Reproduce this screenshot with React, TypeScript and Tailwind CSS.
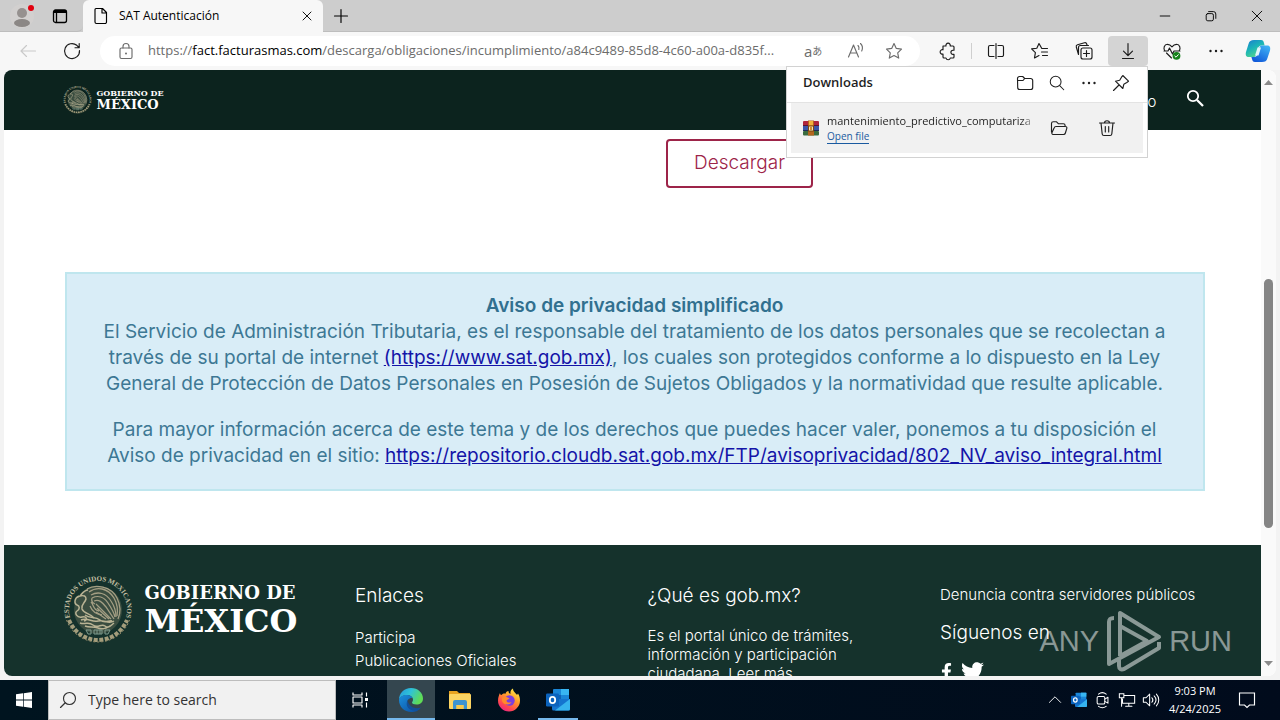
import React from 'react';
import { FaFacebookF, FaTwitter } from 'react-icons/fa';

interface IconProps {
    size?: number;
    className?: string;
    children?: React.ReactNode;
}

// Shared 20x20 outline icon
const Icon: React.FC<IconProps> = ({ size = 20, className = '', children }) => (
    <svg
        width={size}
        height={size}
        viewBox="0 0 20 20"
        fill="none"
        stroke="currentColor"
        strokeWidth="1.15"
        strokeLinecap="round"
        strokeLinejoin="round"
        className={`shrink-0 ${className}`}
        aria-hidden="true"
    >
        {children}
    </svg>
);

const Dots = () => (
    <Icon>
        <g fill="currentColor" stroke="none">
            <circle cx="4.500" cy="10" r="1.200" />
            <circle cx="10" cy="10" r="1.200" />
            <circle cx="15.500" cy="10" r="1.200" />
        </g>
    </Icon>
);

const Magnifier: React.FC<IconProps> = ({ size, className }) => (
    <Icon size={size} className={className}>
        <circle cx="8.500" cy="8.500" r="6" />
        <path d="m13 13 4.500 4.500" />
    </Icon>
);

const TOOLS: { label: string; active?: boolean; icon: React.ReactNode }[] = [
    {
        label: 'Split screen',
        icon: (
            <Icon>
                <path d="M8 4.500H4A1.500 1.500 0 0 0 2.500 6v8A1.500 1.500 0 0 0 4 15.500h4M12 4.500h4A1.500 1.500 0 0 1 17.500 6v8a1.500 1.500 0 0 1-1.500 1.500h-4M10 2.500v15" />
            </Icon>
        ),
    },
    {
        label: 'Favorites',
        icon: (
            <Icon>
                <path d="M17.500 7.500h-5.700L9 2.500 6.800 7.200l-5.200.7 3.800 3.700-.9 5.300L9 14.500M11.500 11h6M12.500 14.500h5" />
            </Icon>
        ),
    },
    {
        label: 'Collections',
        icon: (
            <Icon>
                <rect x="7" y="7" width="11" height="11" rx="2" />
                <path d="M12.500 9.500v6M9.500 12.500h6M4.500 13.500 2.300 6a1.800 1.800 0 0 1 1.200-2.200l7-2a1.800 1.800 0 0 1 2.200 1.200l.5 1.500M4.500 13.500V6.500a2 2 0 0 1 2-2h8" />
            </Icon>
        ),
    },
    {
        label: 'Downloads',
        active: true,
        icon: (
            <Icon>
                <path d="M10 2.500v12M5.500 10.200l4.500 4.500 4.500-4.500M4.500 17.500h11" />
            </Icon>
        ),
    },
    {
        label: 'Browser essentials',
        icon: (
            <Icon>
                <path d="M3 10C.8 7.200 2.300 3.500 5.500 3.300c2 0 3.300 1 4.500 2.500 1.200-1.500 2.500-2.500 4.500-2.500 3.200.2 4.700 3.900 2.500 6.700M2 10h4l1.500-3 3 6 1.500-3h6M4.500 12l5 5" />
                <circle cx="14.500" cy="14.800" r="3.900" fill="#16831b" stroke="none" />
                <path d="m12.800 15 1.200 1.200 2.300-2.500" stroke="#fff" strokeWidth="1" />
            </Icon>
        ),
    },
    { label: 'Settings and more', icon: <Dots /> },
];

const Copilot = () => (
    <svg width="26" height="24" viewBox="0 0 26 24" aria-hidden="true">
        <defs>
            <linearGradient id="copA" x1="0" y1="0" x2="0.6" y2="1">
                <stop offset="0" stopColor="#1b7bd0" />
                <stop offset=".5" stopColor="#19b3b8" />
                <stop offset="1" stopColor="#58d98b" />
            </linearGradient>
            <linearGradient id="copB" x1="0.8" y1="0" x2="0.2" y2="1">
                <stop offset="0" stopColor="#3fb2f5" />
                <stop offset="1" stopColor="#0f56d8" />
            </linearGradient>
        </defs>
        <path d="M9 1h7c2 0 2.500 1 3 3l.6 2.500h-3c-2 0-3 1-3.600 3l-1.600 6c-.6 2-1.600 2.500-3.400 2.500H4c-3 0-3.700-2-3-5L3.500 5C4.300 2 6 1 9 1z" fill="url(#copA)" />
        <path d="M17 23h-7c-2 0-2.500-1-3-3l-.6-2H9c2 0 3-1 3.600-3l1.600-6c.6-2 1.600-2.500 3.400-2.500H22c3 0 3.700 2 3 5L22.500 19c-.8 3-2.500 4-5.500 4z" fill="url(#copB)" />
        <path d="M12.500 8.500h3.500l-2.500 8H10z" fill="#dff5fb" />
    </svg>
);

const TabStrip = () => (
    <div className="flex h-8 bg-[#cdcdcd] text-black">
        <div className="flex w-[83px] shrink-0 items-center rounded-br-md border-b border-[#bdbdbd]">
            <button aria-label="Profile" className="ml-2 flex h-7 w-7 items-center justify-center">
                <svg width="28" height="28" viewBox="0 0 28 28" aria-hidden="true">
                    <circle cx="14" cy="14" r="12" fill="#d2d0cf" />
                    <circle cx="14" cy="11" r="5" fill="#96918f" />
                    <ellipse cx="14" cy="21" rx="8" ry="4" fill="#8b8785" />
                    <circle cx="23" cy="6" r="3" fill="#e1000f" />
                </svg>
            </button>
            <button aria-label="Tab actions" className="ml-[14px] flex h-7 w-5 items-center justify-center">
                <svg width="16" height="16" viewBox="0 0 16 16" fill="none" stroke="#000" strokeWidth="1.3" aria-hidden="true">
                    <rect x="1.500" y="2" width="13" height="12.500" rx="2" />
                    <path d="M2 3.500h12" strokeWidth="3" />
                    <path d="M4.500 4v10" />
                </svg>
            </button>
        </div>
        <div className="flex w-60 items-center rounded-t-md bg-[#f7f7f7] pl-3 pr-[6px]">
            <Icon className="-ml-1">
                <path d="M5 2.500h6.500l4 4v9.500a1.500 1.500 0 0 1-1.500 1.500H5.500A1.500 1.500 0 0 1 4 16V3.500a1 1 0 0 1 1-1zM11 2.500V7h4.500" />
            </Icon>
            <span className="ml-2 flex-1 truncate text-xs">SAT Autenticación</span>
            <button aria-label="Close tab" className="flex h-5 w-5 items-center justify-center">
                <Icon size={16}><path d="m5 5 10 10M15 5 5 15" /></Icon>
            </button>
        </div>
        <div className="flex flex-1 items-center justify-between border-b border-[#bdbdbd]">
            <button aria-label="New tab" className="ml-2 flex h-5 w-5 items-center justify-center">
                <Icon><path d="M10 3.500v13M3.500 10h13" /></Icon>
            </button>
            <div className="flex">
                <button aria-label="Minimize" className="flex h-8 w-[46px] items-center justify-center">
                    <Icon size={16}><path d="M4 10h12" /></Icon>
                </button>
                <button aria-label="Restore" className="flex h-8 w-[46px] items-center justify-center">
                    <Icon size={16}>
                        <rect x="4" y="7" width="9" height="9" rx="2" />
                        <path d="M7 4.500h6A3 3 0 0 1 16 7.500V13" />
                    </Icon>
                </button>
                <button aria-label="Close" className="flex h-8 w-[46px] items-center justify-center">
                    <Icon size={16}><path d="m4 4 12 12M16 4 4 16" /></Icon>
                </button>
            </div>
        </div>
    </div>
);

const WinRar = () => (
    <svg width="16" height="16" viewBox="0 0 16 16" className="shrink-0" aria-hidden="true">
        <rect y="1" width="16" height="5" rx="1" fill="#b0243c" />
        <rect y="6" width="16" height="5" fill="#3a55a8" />
        <rect y="11" width="16" height="4.500" rx="1" fill="#3a6b3e" />
        <rect y="5" width="16" height="1" fill="#5b1430" />
        <rect y="10" width="16" height="1" fill="#1d2c5c" />
        <rect x="5" y="0.500" width="6" height="15" fill="#b5651d" />
        <rect x="6" y="1" width="4" height="4.500" fill="#f3b13c" />
        <rect x="5.500" y="6" width="5" height="5" fill="#f6e3b4" stroke="#7b4612" />
        <rect x="7" y="7" width="2" height="3" fill="#d08a2c" />
    </svg>
);

const DownloadsPanel = () => (
    <section
        aria-label="Downloads"
        className="absolute right-[132px] top-[34px] z-20 w-[362px] border border-[#d2d2d2] bg-white pb-1 text-[#1f1f1f]"
    >
        <div className="flex h-9 items-center border-b border-[#e3e3e3] pb-1 pl-4 pr-[10px]">
            <h2 className="flex-1 text-[13px] font-semibold">Downloads</h2>
            <button aria-label="Open downloads folder" className="flex h-8 w-8 items-center justify-center">
                <Icon>
                    <path d="M2.500 5.500a2 2 0 0 1 2-2h3.200l2 2h6a2 2 0 0 1 2 2v7a2 2 0 0 1-2 2h-11a2 2 0 0 1-2-2zM2.500 7.500H8l1.700-2" />
                </Icon>
            </button>
            <button aria-label="Search downloads" className="flex h-8 w-8 items-center justify-center">
                <Magnifier size={18} />
            </button>
            <button aria-label="More options" className="flex h-8 w-8 items-center justify-center"><Dots /></button>
            <button aria-label="Pin downloads" className="flex h-8 w-8 items-center justify-center">
                <Icon>
                    <path d="m11.800 2.500 5.700 5.700-1.700 1.300-3 1.800-1 4.200L4.500 8.200l4.200-1 1.800-3zM7.500 12.500l-5 5" />
                </Icon>
            </button>
        </div>
        <div className="mx-1 flex h-[50px] items-center bg-[#f1f1f1] pl-3">
            <WinRar />
            <div className="ml-2 flex w-[211px] flex-col items-start overflow-hidden">
                <p className="w-full overflow-hidden whitespace-nowrap text-[11px] leading-[17px] [mask-image:linear-gradient(to_right,#000_92%,transparent)]">
                    mantenimiento_predictivo_computariza
                </p>
                <a href="#open" className="border-b border-[#1a5aa0] text-[10px] leading-[14px] text-[#1a5aa0]">Open file</a>
            </div>
            <button aria-label="Show in folder" className="ml-[11px] flex h-8 w-5 items-center justify-center">
                <Icon>
                    <path d="M2.500 14V5.500a1.800 1.800 0 0 1 1.800-1.800h3l2 2h5a1.800 1.800 0 0 1 1.800 1.800v1M4 16.500h10.500a2 2 0 0 0 1.900-1.500l1.400-4.700c.3-1-.3-1.800-1.300-1.800H7a2 2 0 0 0-1.900 1.400L3 14.500c-.3 1 0 2 1 2z" />
                </Icon>
            </button>
            <button aria-label="Delete file" className="ml-7 flex h-8 w-5 items-center justify-center">
                <Icon>
                    <path d="M2.500 5h15M4 5l1.200 11a1.700 1.700 0 0 0 1.700 1.500h6.200a1.700 1.700 0 0 0 1.700-1.500L16 5M7.500 5c0-3 5-3 5 0M8.300 8.500v5.500M11.700 8.500v5.500" />
                </Icon>
            </button>
        </div>
    </section>
);

const Toolbar = () => (
    <div className="relative flex h-[38px] items-center bg-[#f7f7f7] pr-[2px] text-[#1b1b1b]">
        <button aria-label="Back" disabled className="ml-[18px] flex h-[30px] w-5 items-center justify-center text-[#c9c9c9]">
            <Icon><path d="M17.500 10H3M8.500 4.500 3 10l5.500 5.500" /></Icon>
        </button>
        <button aria-label="Refresh" className="ml-6 flex h-[30px] w-5 items-center justify-center">
            <Icon><path d="M17.500 9.500A7.500 7.500 0 1 1 14.800 4.300L17 6.500M17.200 2.500v4.200H13" /></Icon>
        </button>
        <div className="ml-[18px] flex h-[30px] min-w-0 flex-1 items-center rounded-full bg-white px-4 text-[#6c6c6c]">
            <Icon>
                <rect x="4" y="7" width="12" height="10.500" rx="1.500" />
                <path d="M7 7V5.500a3 3 0 0 1 6 0V7" />
                <circle cx="10" cy="12.500" r="1" fill="currentColor" stroke="none" />
            </Icon>
            <p className="ml-3 min-w-0 flex-1 truncate text-[13px]">
                https://<span className="text-black">fact.facturasmas.com</span>/descarga/obligaciones/incumplimiento/a84c9489-85d8-4c60-a00a-d835f...
            </p>
            <button aria-label="Translate" className="ml-4 flex h-6 w-6 items-center whitespace-nowrap text-[15px] leading-6">
                a<span className="text-[10px]">あ</span>
            </button>
            <button aria-label="Read aloud" className="ml-4 flex h-6 w-6 items-center justify-center">
                <Icon><path d="M2.500 16 7.500 4l5 12M4.300 12h6.400M12 4.500c1.200 1.300 1.200 2.700.8 4M14.500 2.500c2.300 2.200 2.300 5 1.200 7.500" /></Icon>
            </button>
            <button aria-label="Add to favorites" className="ml-4 flex h-6 w-5 items-center justify-center">
                <Icon><path d="m10 2.500 2.300 4.900 5.200.7-3.800 3.700 1 5.300-4.700-2.600-4.700 2.600 1-5.300-3.800-3.700 5.200-.7z" /></Icon>
            </button>
        </div>
        <button aria-label="Extensions" className="ml-2 flex h-[30px] w-10 items-center justify-center">
            <Icon>
                <path d="M5 5h3a2.200 2.200 0 1 1 4.200 0H15a1 1 0 0 1 1 1v3.200h-1a2.100 2.100 0 0 0 0 4.200h1v2.600a1 1 0 0 1-1 1h-2.700a2.200 2.200 0 0 1-4.300 0H6a1 1 0 0 1-1-1v-3a2.200 2.200 0 1 1 0-4.200z" />
            </Icon>
        </button>
        <span className="ml-[3px] mr-1 h-4 w-px bg-[#cfcfcf]" />
        <div className="flex gap-1">
            {TOOLS.map(({ label, active, icon }) => (
                <button
                    key={label}
                    aria-label={label}
                    className={`flex h-[30px] w-10 items-center justify-center rounded ${active ? 'bg-[#d4d4d4]' : ''}`}
                >
                    {icon}
                </button>
            ))}
        </div>
        <button aria-label="Copilot" className="ml-[2px] flex h-[30px] w-10 items-center justify-center">
            <Copilot />
        </button>
        <DownloadsPanel />
    </div>
);

const Seal: React.FC<{ size: number }> = ({ size }) => (
    <svg width={size} height={size} viewBox="0 0 70 70" fill="none" stroke="#a39e83" aria-hidden="true" className="shrink-0 overflow-visible">
        <defs>
            <path id="sealArc" d="M7.500 45A29 29 0 1 1 62.500 45" />
        </defs>
        <circle cx="35" cy="36" r="24" fill="#3a4d40" stroke="none" />
        <text fill="#c6c0a4" stroke="none" textAnchor="middle" className="font-['Liberation_Serif',serif] text-[7px]">
            <textPath href="#sealArc" startOffset="50%">ESTADOS UNIDOS MEXICANOS</textPath>
        </text>
        {/* eagle wing */}
        <g strokeWidth="1.300">
            <path d="M24 15c8-5 24-3 30 9 4 8 4 14 1 21" />
            <path d="M26 18c8-6 19-4 25 6 4 7 4 12 3 18" />
            <path d="M28 21c7-4 15-2 20 6 4 6 5 10 5 16" />
            <path d="M29 24c6-3 12-1 16 5 4 6 6 9 7 14" />
            <path d="M31 27c5-2 8 1 12 6l8 12" />
            <path d="M33 30l15 15M34 34l12 11M33 38l10 7" />
            <path d="M28 28c3 3 2 8 8 9M27 32c2 5 5 8 12 9M29 24c-1 3 1 5 3 6" />
        </g>
        {/* head, snake and claws */}
        <g strokeWidth="1.500" stroke="#b9b394">
            <path d="M25 16c-4 0-6 4-8 6 4-1 6 0 6 3-1 4-5 5-4 10 2 5 8 4 12 9" />
            <path d="M16 22c-5 2-5 8-2 9s3 4 0 6 0 7 5 6 6 3 2 4" />
            <path d="M22 41c5 4 10 1 15 5s9 0 12 1M18 46c7-3 11 3 17 1s10 4 16 0" />
            <path d="M17 49c6 2 8-2 13 2s8-2 12 1 6-1 9-3M22 52c5 2 8 0 13 2s8 0 12-2" />
        </g>
        <path d="M23 56h5v4h-3zM31 56h8v4h-8zM42 56h5l-2 4h-3zM34 56v4M37 56v4" stroke="#7f9b8d" />
        {/* laurel and oak */}
        <path d="M6 46c5 12 16 20 29 20s24-8 29-20" stroke="#a39d7c" strokeWidth="4" strokeDasharray="4 1.500" />
        <path d="M3.500 46c5 14 18 22 31.500 22s26.500-8 31.500-22" stroke="#8d8767" strokeDasharray="2 2" />
    </svg>
);

const HeaderBrand = () => (
    <a href="#inicio" className="flex items-center gap-[5px] pb-px font-['DejaVu_Serif',serif] font-bold text-white">
        <Seal size={29} />
        <span className="flex flex-col">
            <span className="text-[8px] leading-[10px]">GOBIERNO DE</span>
            <span className="text-[13px] leading-[14px]">MÉXICO</span>
        </span>
    </a>
);

const FooterBrand = () => (
    <a href="#inicio" className="flex items-center gap-3 font-['DejaVu_Serif',serif] font-bold text-white">
        <Seal size={70} />
        <span className="flex flex-col">
            <span className="whitespace-nowrap text-[18px] leading-6">GOBIERNO DE</span>
            <span className="text-[32px] leading-8">MÉXICO</span>
        </span>
    </a>
);

const Notice = () => (
    <div className="mt-[84px] border-2 border-[#bfe6ee] bg-[#d9edf7] px-5 pb-5 pt-[19px] text-center text-[19px] leading-[26px] text-[#3d7894]">
        <p className="font-semibold text-[#31708f]">Aviso de privacidad simplificado</p>
        <p>
            El Servicio de Administración Tributaria, es el responsable del tratamiento de los datos personales que se recolectan a
            <br />
            través de su portal de internet <a href="#sat" className="text-[#1414a8] underline">(https://www.sat.gob.mx)</a>, los cuales son protegidos conforme a lo dispuesto en la Ley
            <br />
            General de Protección de Datos Personales en Posesión de Sujetos Obligados y la normatividad que resulte aplicable.
        </p>
        <p className="mt-5">
            Para mayor información acerca de este tema y de los derechos que puedes hacer valer, ponemos a tu disposición el
            <br />
            Aviso de privacidad en el sitio:{' '}
            <a href="#aviso" className="text-[#1414a8] underline">
                https://repositorio.cloudb.sat.gob.mx/FTP/avisoprivacidad/802_NV_aviso_integral.html
            </a>
        </p>
    </div>
);

const Watermark = () => (
    <div className="flex items-center gap-[7px] font-['Liberation_Sans',sans-serif] text-[29px] leading-[62px] text-white/50">
        <span>ANY</span>
        <svg width="56" height="62" viewBox="0 0 56 62" fill="none" stroke="currentColor" strokeWidth="4" strokeLinejoin="round" aria-hidden="true">
            <path d="M8 8C4 8 3 9 3 12v42l50-27L14 3v43M14 16l27 15-27 15M13 50v6c0 3 2 4 5 3l35-21v-6" />
        </svg>
        <span>RUN</span>
    </div>
);

const Footer = () => (
    <footer className="mt-[54px] bg-[#15322c] pb-10 text-white">
        <div className="mx-auto grid max-w-[1170px] grid-cols-4">
            <div className="px-[15px] pt-[29px]">
                <FooterBrand />
            </div>
            <div className="px-[15px] pt-[39px]">
                <h3 className="text-[19px] font-light leading-6">Enlaces</h3>
                <ul className="mt-[18px] text-[15px] font-light leading-[23px]">
                    <li><a href="#participa">Participa</a></li>
                    <li><a href="#publicaciones">Publicaciones Oficiales</a></li>
                </ul>
            </div>
            <div className="px-[15px] pt-[39px]">
                <h3 className="text-[19px] font-light leading-6">¿Qué es gob.mx?</h3>
                <p className="mt-[18px] text-[15px] font-light leading-[19px]">
                    Es el portal único de trámites,
                    <br />
                    información y participación
                    <br />
                    ciudadana. <a href="#mas">Leer más</a>
                </p>
            </div>
            <div className="px-[15px] pt-[38px]">
                <p className="whitespace-nowrap text-[15px] font-light leading-[23px]">
                    <a href="#denuncia">Denuncia contra servidores públicos</a>
                </p>
                <h3 className="mt-[15px] text-[19px] font-light leading-6">Síguenos en</h3>
                <div className="mt-[15px] flex items-center gap-[6px]">
                    <a href="#facebook" aria-label="Facebook"><FaFacebookF size={17} className="-ml-[2px]" /></a>
                    <a href="#twitter" aria-label="Twitter"><FaTwitter size={23} /></a>
                </div>
            </div>
        </div>
    </footer>
);

const WebPage = () => (
    <div className="relative flex min-h-0 flex-1 bg-[#f3f3f3] px-1 pb-1">
        <div className="flex min-w-0 flex-1 overflow-hidden rounded-lg bg-white">
            <div className="min-w-0 flex-1 overflow-hidden font-['Inter',sans-serif]">
                <header className="h-[60px] bg-[#0c231e]">
                    <div className="mx-auto flex h-full max-w-[1170px] items-center justify-between pl-[15px] pr-[13px]">
                        <HeaderBrand />
                        <nav className="flex items-center gap-7 text-white">
                            <a href="#gobierno" className="pt-1 text-[15px] font-light">o</a>
                            <button aria-label="Buscar" className="pb-1">
                                <svg width="20" height="20" viewBox="0 0 20 20" fill="none" stroke="currentColor" strokeWidth="1.800" aria-hidden="true">
                                    <circle cx="8" cy="8" r="5.200" />
                                    <path d="m12 12 6 6" strokeWidth="2.300" />
                                </svg>
                            </button>
                        </nav>
                    </div>
                </header>
                <main className="mx-auto max-w-[1170px] pl-[17px] pr-[13px] pt-[9px]">
                    <div className="flex justify-center pl-[210px]">
                        <button className="h-[49px] w-[147px] rounded border-2 border-[#9d2449] text-[19px] font-light text-[#9d2449]">Descargar</button>
                    </div>
                    <Notice />
                </main>
                <Footer />
            </div>
            {/* scrollbar */}
            <div className="flex w-[15px] flex-col items-center bg-[#fafafa] text-[#8a8a8a]">
                <svg width="15" height="24" viewBox="0 0 15 24" aria-hidden="true"><path d="M3 15l4.500-5L12 15z" fill="currentColor" /></svg>
                <div className="flex-[185]" />
                <div className="w-[9px] flex-[249] rounded-full bg-[#858585]" />
                <div className="flex-[127]" />
                <svg width="15" height="21" viewBox="0 0 15 21" aria-hidden="true"><path d="M3 6l4.500 5L12 6z" fill="currentColor" /></svg>
            </div>
        </div>
        <div className="pointer-events-none absolute bottom-2 right-12 z-10">
            <Watermark />
        </div>
    </div>
);

const Outlook: React.FC<{ size: number }> = ({ size }) => (
    <svg width={size} height={size} viewBox="0 0 24 24" aria-hidden="true">
        <rect x="7" y="1" width="16" height="12" rx="1" fill="#1a86d8" />
        <rect x="15" y="1" width="8" height="6" fill="#38b6f2" />
        <rect x="7" y="7" width="8" height="6" fill="#0f62b4" />
        <path d="M6 11h18v10a1.500 1.500 0 0 1-1.500 1.500H7.500A1.500 1.500 0 0 1 6 21z" fill="#1474cf" />
        <path d="M24 11v10a1.500 1.500 0 0 1-1.500 1.500H9z" fill="#36b3ee" />
        <rect x="0" y="5.500" width="13" height="13" rx="1.200" fill="#0b63bd" />
        <ellipse cx="6.500" cy="12" rx="2.700" ry="3.100" fill="none" stroke="#fff" strokeWidth="1.800" />
    </svg>
);

const Edge = () => (
    <svg width="26" height="26" viewBox="0 0 26 26" aria-hidden="true">
        <defs>
            <linearGradient id="edgeTop" x1="0" y1="0" x2="1" y2="0.400">
                <stop offset="0" stopColor="#2597dc" />
                <stop offset=".5" stopColor="#2fc2d8" />
                <stop offset="1" stopColor="#5fdc56" />
            </linearGradient>
            <linearGradient id="edgeLow" x1="0" y1="0" x2="1" y2="1">
                <stop offset="0" stopColor="#1b8fdc" />
                <stop offset="1" stopColor="#0b4a9c" />
            </linearGradient>
        </defs>
        <path d="M1 13C1 6 6 1 13 1s12 5 12 10.500c0 4-3 6-6.500 6-3 0-4.500-1-4.500-2 0-.7 1-1 1-3C15 10 12 8 9 8c-4.500 0-8 3-8 5z" fill="url(#edgeTop)" />
        <path d="M1 13c0-3 4-5 8-5 3 0 5 1.500 5.500 3C11 10.500 9 13 9 16c0 4.500 4 6.500 8 6.500 2.500 0 4.500-1 5.500-1.800C20.500 24 17 25 13.500 25 6 25 1 19.500 1 13z" fill="url(#edgeLow)" />
        <path d="M9.500 13.500C7 18 10.500 24 17 23.500c3 0 5-1.500 6-3-5 2-12 0-13.500-7z" fill="#124f98" />
    </svg>
);

const Explorer = () => (
    <svg width="24" height="24" viewBox="0 0 24 24" aria-hidden="true">
        <path d="M1 3h8l2 2h11v5H1z" fill="#e8a320" />
        <rect x="1" y="6" width="22" height="15" rx="1" fill="#fcd462" />
        <path d="M5 21v-7a2 2 0 0 1 2-2h10a2 2 0 0 1 2 2v7h-3.500v-4h-7v4z" fill="#3c93d0" />
        <rect x="8.500" y="17" width="7" height="4" fill="#f8c84b" />
    </svg>
);

const Firefox = () => (
    <svg width="24" height="24" viewBox="0 0 24 24" aria-hidden="true">
        <defs>
            <linearGradient id="foxBody" x1="0.800" y1="0" x2="0.200" y2="1">
                <stop offset="0" stopColor="#fff04a" />
                <stop offset=".4" stopColor="#ff9a2a" />
                <stop offset=".75" stopColor="#ff4650" />
                <stop offset="1" stopColor="#e81f8c" />
            </linearGradient>
        </defs>
        <path d="M3 5c0 1 .5 2 1.500 2C6 5.500 7 5.500 8.500 5.700 9 4 10 3.200 11.500 3c0 2 .8 2.500 2 3C13 3.500 14 1.500 16 .5c0 3.500 3 4.500 4 6.500l1-1.500c1.500 2.500 2 4.500 2 7A11 11 0 0 1 1 12.500C1 9.500 2 7 3 5z" fill="url(#foxBody)" />
        <circle cx="12.500" cy="12.500" r="5.200" fill="#7a3ee0" />
        <path d="M5 9.500c3-1 6-.5 7.500 1-1 1-2.500 1-3 2 0 1.500 2 3 5 1.500-1.500 3.500-8 3.500-9.500-1z" fill="#ff8a2b" />
    </svg>
);

const Taskbar = () => (
    <div className="flex h-10 shrink-0 items-stretch bg-linear-to-r from-[#00141f] to-[#010b1c] text-white">
        <button aria-label="Start" className="flex w-12 items-center justify-center">
            <svg width="16" height="16" viewBox="0 0 16 16" fill="#fff" aria-hidden="true">
                <path d="M0 2.300 7 1.300v6.300H0zM7.700 1.200 16 0v7.600H7.700zM0 8.400h7v6.300l-7-1zM7.700 8.400H16V16l-8.300-1.200z" />
            </svg>
        </button>
        <label className="flex w-72 items-center border border-[#bdbdbd] bg-[#f1f1f1] pl-[9px] text-[#333]">
            <Magnifier className="-scale-x-100" />
            <input
                type="text"
                aria-label="Search"
                placeholder="Type here to search"
                className="ml-2 min-w-0 flex-1 bg-transparent px-[2px] text-sm outline-none placeholder:text-[#333]"
            />
        </label>
        <button aria-label="Task view" className="flex w-12 items-center justify-center">
            <Icon>
                <path d="M3 2.500v2.500h9V2.500M3 17.500V15h9v2.500M3 7h9v6H3zM16.500 2.500v4M16.500 12.500v5" strokeLinecap="butt" />
                <rect x="15" y="8" width="3" height="3" fill="currentColor" stroke="none" />
            </Icon>
        </button>
        <button aria-label="Microsoft Edge" className="ml-[3px] flex w-12 items-center justify-center border-b-2 border-[#76b9ed] bg-[#34464f] pt-[2px]">
            <Edge />
        </button>
        <button aria-label="File Explorer" className="flex w-[49px] items-center justify-center"><Explorer /></button>
        <button aria-label="Firefox" className="flex w-[49px] items-center justify-center"><Firefox /></button>
        <button aria-label="Outlook" className="ml-[5px] flex w-10 items-center justify-center border-b-2 border-[#76b9ed] pt-[2px]">
            <Outlook size={24} />
        </button>
        <div className="ml-auto flex items-center">
            <button aria-label="Show hidden icons" className="flex w-6 justify-center">
                <Icon size={16}><path d="m3 13 7-7 7 7" /></Icon>
            </button>
            <button aria-label="Outlook notifications" className="flex w-6 justify-center"><Outlook size={16} /></button>
            <button aria-label="Meet now" className="flex w-6 justify-center">
                <Icon size={18}>
                    <rect x="3.500" y="6" width="8.500" height="8.500" rx="1.500" />
                    <path d="m12 9 3.500-2v6.500L12 11.500M5 3.500c2.500-2 6-2 8.500 0M5 17c2.500 1.800 6 1.800 8.500 0" />
                </Icon>
            </button>
            <button aria-label="Network" className="flex w-6 justify-center">
                <Icon size={18}>
                    <path d="M7 5h11.500v8.500H5V9M1.500 3h5v4.500h-5zM4 7.500V17M12 13.500V17M8.500 17h7" strokeLinejoin="miter" />
                </Icon>
            </button>
            <button aria-label="Volume" className="flex w-6 justify-center">
                <Icon size={18}>
                    <path d="M1.500 7.500h3l4-4v13l-4-4h-3zM11 7.500c1.300 1.500 1.300 3.500 0 5M13.500 5.500c2.500 2.700 2.500 6.300 0 9M16 3.500c3.500 3.800 3.500 9.200 0 13" />
                </Icon>
            </button>
            <div className="w-16 text-center text-[11px] leading-[18px]">
                <p>9:03 PM</p>
                <p>4/24/2025</p>
            </div>
            <button aria-label="Notifications" className="ml-[10px] mr-[23px] flex w-5 justify-center">
                <Icon><path d="M2.500 3h15v12h-5L10 17.500 7.500 15h-5z" strokeLinejoin="miter" /></Icon>
            </button>
        </div>
    </div>
);

export default function App() {
    return (
        <div className="flex h-screen flex-col overflow-hidden font-['Open_Sans','Noto_Sans_CJK_JP',sans-serif]">
            <TabStrip />
            <Toolbar />
            <WebPage />
            <Taskbar />
        </div>
    );
}
